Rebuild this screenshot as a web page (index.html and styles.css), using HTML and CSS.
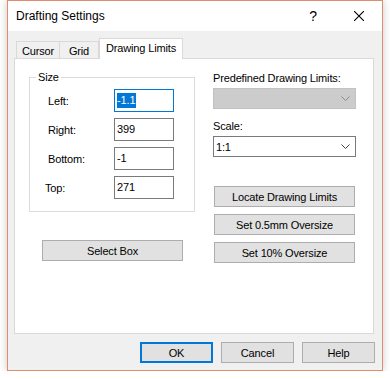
FILE: index.html
```html
<!DOCTYPE html>
<html lang="en">
<head>
  <meta charset="UTF-8">
  <title>Drafting Settings</title>
  <link rel="stylesheet" href="styles.css">
</head>
<body>
  <div class="window">
    <div class="titlebar">
      <span class="title">Drafting Settings</span>
      <span class="caption-btn help-btn">?</span>
      <span class="caption-btn close-btn">
        <svg width="10" height="10" viewBox="0 0 10 10">
          <path d="M0 0L10 10M10 0L0 10" stroke="#000" stroke-width="1.1" fill="none"></path>
        </svg>
      </span>
    </div>

    <div class="dialog-body">
      <div class="tabs">
        <div class="tab tab-cursor">Cursor</div>
        <div class="tab tab-grid">Grid</div>
        <div class="tab tab-active">Drawing Limits</div>
      </div>

      <div class="panel">
        <div class="col-left">
          <fieldset class="groupbox">
            <legend>Size</legend>
            <div class="row">
              <span class="lbl">Left:</span>
              <div class="field field-focus"><span class="selected">-1.1</span></div>
            </div>
            <div class="row">
              <span class="lbl">Right:</span>
              <div class="field">399</div>
            </div>
            <div class="row">
              <span class="lbl">Bottom:</span>
              <div class="field">-1</div>
            </div>
            <div class="row">
              <span class="lbl lbl-top">Top:</span>
              <div class="field">271</div>
            </div>
          </fieldset>
          <div class="btn btn-select">Select Box</div>
        </div>

        <div class="col-right">
          <div class="caption">Predefined Drawing Limits:</div>
          <div class="combo combo-disabled">
            <span></span>
            <svg width="9" height="5" viewBox="0 0 9 5"><path d="M0.5 0.5L4.5 4.5L8.5 0.5" stroke="#8a8a8a" fill="none"></path></svg>
          </div>
          <div class="caption caption-scale">Scale:</div>
          <div class="combo">
            <span>1:1</span>
            <svg width="9" height="5" viewBox="0 0 9 5"><path d="M0.5 0.5L4.5 4.5L8.5 0.5" stroke="#444" fill="none"></path></svg>
          </div>
          <div class="btn-stack">
            <div class="btn">Locate Drawing Limits</div>
            <div class="btn">Set 0.5mm Oversize</div>
            <div class="btn">Set 10% Oversize</div>
          </div>
        </div>
      </div>

      <div class="footer">
        <div class="btn btn-small btn-default">OK</div>
        <div class="btn btn-small">Cancel</div>
        <div class="btn btn-small">Help</div>
      </div>
    </div>
  </div>
</body>
</html>
```

FILE: styles.css
```css
/* Général */
* {
  margin: 0;
  padding: 0;
  box-sizing: border-box;
}

body {
  font-family: "Liberation Sans", Arial, sans-serif;
  font-size: 11px;
  letter-spacing: -0.15px;
  color: #000;
  background-color: #fff;
}

.window {
  width: 376px;
  height: 371px;
  margin-left: 7px;
  border: 1px solid #df8d6d;
  background-color: #f0f0f0;
  box-shadow: 0 0 8px rgba(0, 0, 0, 0.22);
}

/* Barre de titre */
.titlebar {
  height: 30px;
  background-color: #fff;
  display: flex;
  align-items: center;
  padding-left: 8px;
}

.title {
  font-size: 12px;
  letter-spacing: 0;
  flex: 1;
}

.caption-btn {
  width: 46px;
  height: 30px;
  display: flex;
  align-items: center;
  justify-content: center;
}

.help-btn {
  font-size: 14px;
}

/* Onglets */
.dialog-body {
  padding: 7px 0 0 6px;
}

.tabs {
  height: 20px;
  display: flex;
  align-items: flex-end;
  padding-left: 2px;
}

.tab {
  height: 17px;
  border: 1px solid #d9d9d9;
  border-bottom: none;
  display: flex;
  align-items: center;
  justify-content: center;
  padding-top: 1px;
}

.tab-cursor {
  width: 43px;
  border-right: none;
}

.tab-grid {
  width: 40px;
}

.tab-active {
  width: 84px;
  height: 21px;
  margin-bottom: -1px;
  background-color: #fff;
  position: relative;
  padding-top: 0;
  padding-bottom: 2px;
}

.panel {
  width: 360px;
  height: 276px;
  border: 1px solid #d9d9d9;
  background-color: #fff;
  display: flex;
  padding: 12px 0 0 14px;
}

/* Colonne gauche */
.col-left {
  width: 166px;
}

.groupbox {
  width: 166px;
  border: 1px solid #dcdcdc;
  padding: 5px 0 12px 0;
}

.groupbox legend {
  margin-left: 6px;
  padding: 0 2px;
  line-height: 13px;
}

.row {
  display: flex;
  align-items: center;
  height: 23px;
  margin-bottom: 6px;
  padding-left: 18px;
}

.row:last-child {
  margin-bottom: 0;
}

.lbl {
  width: 66px;
}

.lbl-top {
  margin-left: -3px;
  width: 69px;
}

.field {
  width: 60px;
  height: 23px;
  border: 1px solid #7a7a7a;
  padding: 3px 0 0 2px;
  line-height: 15px;
}

.field-focus {
  border-color: #0078d7;
}

.selected {
  background-color: #0078d7;
  color: #fff;
  display: inline-block;
  padding-right: 1px;
}

/* Boutons */
.btn {
  width: 141px;
  height: 21px;
  background-color: #e1e1e1;
  border: 1px solid #adadad;
  display: flex;
  align-items: center;
  justify-content: center;
}

.btn-select {
  margin: 28px 0 0 13px;
}

/* Colonne droite */
.col-right {
  width: 143px;
  margin-left: 18px;
  padding-top: 1px;
}

.caption {
  line-height: 13px;
  margin-bottom: 3px;
}

.caption-scale {
  margin-top: 11px;
}

.combo {
  height: 21px;
  border: 1px solid #7a7a7a;
  display: flex;
  align-items: center;
  justify-content: space-between;
  padding: 0 5px 0 2px;
}

.combo-disabled {
  background-color: #cccccc;
  border-color: #c2c2c2;
}

.btn-stack {
  margin-top: 29px;
  display: flex;
  flex-direction: column;
  gap: 7px;
  padding-left: 1px;
}

/* Pied de la fenêtre */
.footer {
  display: flex;
  justify-content: flex-end;
  gap: 8px;
  padding: 8px 7px 0 0;
}

.btn-small {
  width: 73px;
}

.btn-default {
  border: 2px solid #0078d7;
}
```
